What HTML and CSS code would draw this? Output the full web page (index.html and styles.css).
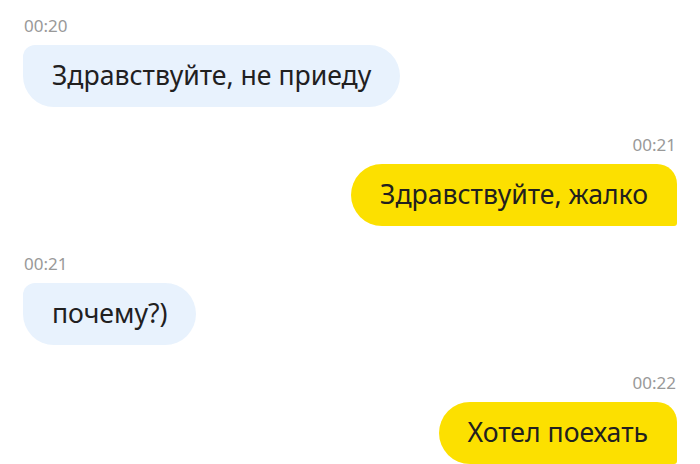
FILE: index.html
```html
<!DOCTYPE html>
<html lang="ru">
<head>
    <meta charset="UTF-8">
    <meta name="viewport" content="width=device-width, initial-scale=1.0">
    <title>Чат</title>
    <link rel="stylesheet" href="styles.css">
</head>
<body>
    <!-- Chat messages -->
    <div class="chat">
        <div class="message incoming">
            <div class="time">00:20</div>
            <div class="bubble">Здравствуйте, не приеду</div>
        </div>

        <div class="message outgoing">
            <div class="time">00:21</div>
            <div class="bubble">Здравствуйте, жалко</div>
        </div>

        <div class="message incoming">
            <div class="time">00:21</div>
            <div class="bubble">почему?)</div>
        </div>

        <div class="message outgoing">
            <div class="time">00:22</div>
            <div class="bubble">Хотел поехать</div>
        </div>
    </div>
</body>
</html>
```

FILE: styles.css
```css
/* Base */
body {
    margin: 0;
    padding: 0;
    background-color: #fff;
    font-family: 'Noto Sans', 'Open Sans', sans-serif;
    color: #21201f;
}

.chat {
    display: flex;
    flex-direction: column;
    gap: 29px;
    padding: 17px 23px 0 23px;
}

/* Message group */
.message {
    display: flex;
    flex-direction: column;
    gap: 10px;
}

.message.incoming {
    align-items: flex-start;
}

.message.outgoing {
    align-items: flex-end;
}

.time {
    font-size: 17px;
    line-height: 18px;
    color: #999;
    padding: 0 1px;
}

.bubble {
    font-size: 26.6px;
    line-height: 28px;
    padding: 16px 29px 18px;
}

.incoming .bubble {
    background-color: #e8f2fd;
    border-radius: 12px 31px 31px 31px;
}

.outgoing .bubble {
    background-color: #fce000;
    border-radius: 31px 20px 3px 31px;
}
```
